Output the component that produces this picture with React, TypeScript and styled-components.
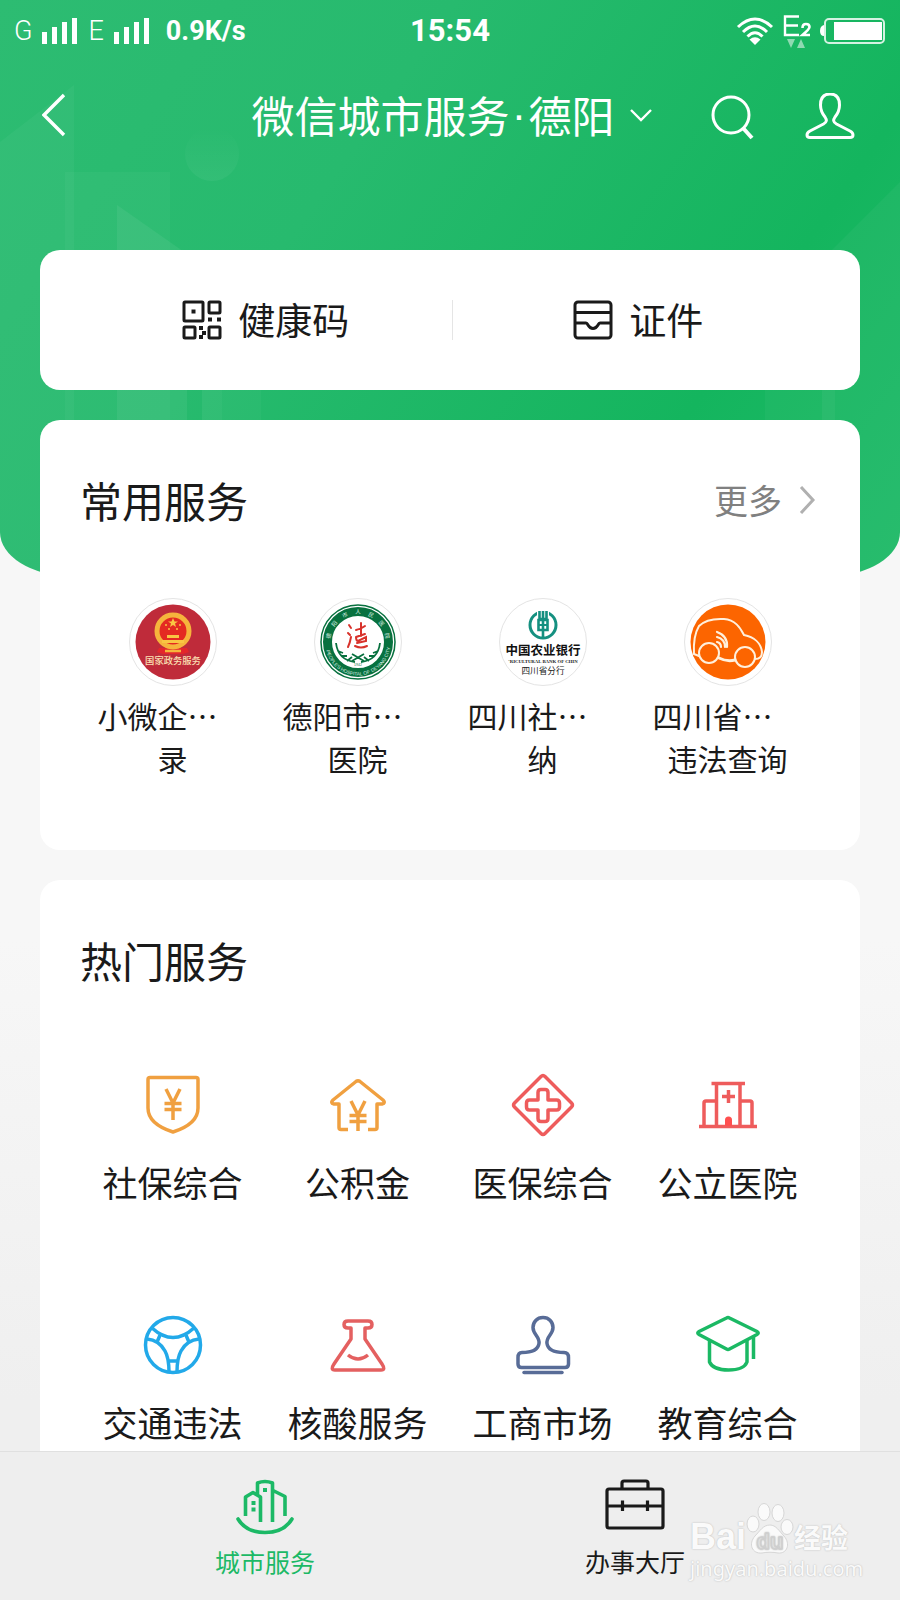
import React from "react";
import styled, { createGlobalStyle } from "styled-components";

const GlobalStyle = createGlobalStyle`
  * { box-sizing: border-box; }
  body {
    margin: 0;
    background: #f6f6f6;
    color: #1a1a1a;
    font-family: Roboto, "Noto Sans CJK SC", sans-serif;
  }
  button { font: inherit; color: inherit; background: none; border: 0; padding: 0; cursor: pointer; }
  a { color: inherit; text-decoration: none; }
  h1, h2, p { margin: 0; font-weight: 400; }
  svg { display: block; flex: none; }
`;

const cjk = `"Noto Sans CJK SC", sans-serif`;

const Screen = styled.div`
  height: 100vh;
  display: flex;
  flex-direction: column;
  font-family: ${cjk};
`;

const Scroller = styled.div`
  flex: 1;
  min-height: 0;
  overflow-y: auto;
  scrollbar-width: none;
  display: grid;
  grid-template-columns: minmax(0, 1fr);
  align-items: start;
  background: linear-gradient(#f7f7f7 0 940px, #efefef 1400px);
`;

const Backdrop = styled.div`
  grid-area: 1 / 1;
  height: 576px;
  display: flex;
  justify-content: space-between;
  overflow: hidden;
  border-radius: 0 0 70px 70px / 0 0 44px 44px;
  background: linear-gradient(125deg, #2dbc72 0%, #27ba6e 35%, #14b55e 75%, #20ba68 100%);
`;

const Content = styled.div`
  grid-area: 1 / 1;
  display: flex;
  flex-direction: column;
`;

const StatusBar = styled.div`
  height: 62px;
  padding: 0 14px;
  display: grid;
  grid-template-columns: 1fr auto 1fr;
  align-items: center;
  color: #fff;
  font-family: Roboto, sans-serif;
`;

const StatusGroup = styled.div<{ $end?: boolean }>`
  display: flex;
  align-items: center;
  justify-content: ${(p) => (p.$end ? "flex-end" : "flex-start")};
  gap: ${(p) => (p.$end ? 8 : 10)}px;
`;

const Network = styled.span`
  font-size: 27px;
  line-height: 32px;
  font-weight: 300;
`;

const Speed = styled.span`
  margin-left: 6px;
  font-size: 27px;
  line-height: 32px;
  font-weight: 700;
`;

const Clock = styled.time`
  font-size: 31px;
  line-height: 36px;
  font-weight: 700;
`;

const TitleBar = styled.header`
  height: 110px;
  margin-bottom: 78px;
  padding: 0 42px;
  display: grid;
  grid-template-columns: 1fr auto 1fr;
  align-items: center;
  color: #fff;
`;

const CityPicker = styled.button`
  display: flex;
  align-items: center;
  gap: 14px;
  padding-left: 4px;
`;

const Title = styled.h1`
  display: flex;
  padding-bottom: 6px;
  font-size: 43px;
  line-height: 60px;
`;

const Dot = styled.span`
  width: 19px;
  text-align: center;
  font-family: "Liberation Sans", sans-serif;
`;

const Actions = styled.div`
  display: flex;
  justify-content: flex-end;
  gap: 46px;
`;

const Main = styled.main`
  padding: 0 40px 30px;
  display: flex;
  flex-direction: column;
  gap: 30px;
`;

const Card = styled.section`
  background: #fff;
  border-radius: 20px;
`;

const QuickCard = styled(Card)`
  height: 140px;
  padding: 0 36px 0 40px;
  display: grid;
  grid-template-columns: 1fr 1px 1fr;
  align-items: center;
`;

const Divider = styled.span`
  height: 40px;
  background: #e5e5e5;
`;

const QuickLink = styled.a`
  display: flex;
  align-items: center;
  justify-content: center;
  gap: 16px;
  font-size: 37px;
  line-height: 52px;
`;

const QuickText = styled.span`
  padding-bottom: 2px;
`;

const ServiceCard = styled(Card)<{ $bottom: number }>`
  padding: 50px 40px ${(p) => p.$bottom}px;
`;

const CardHead = styled.div`
  height: 64px;
  padding-bottom: 4px;
  display: flex;
  align-items: center;
  justify-content: space-between;
`;

const CardTitle = styled.h2`
  font-size: 42px;
  line-height: 60px;
`;

const More = styled.a`
  display: flex;
  align-items: center;
  gap: 16px;
  padding-right: 4px;
  color: #808080;
  font-size: 34px;
  line-height: 48px;
`;

const Grid = styled.div<{ $top: number; $gap?: number }>`
  margin-top: ${(p) => p.$top}px;
  display: grid;
  grid-template-columns: repeat(4, minmax(0, 1fr));
  row-gap: ${(p) => p.$gap ?? 0}px;
`;

const Item = styled.a`
  display: flex;
  flex-direction: column;
  align-items: center;
`;

const Badge = styled.span`
  width: 88px;
  height: 88px;
  margin-bottom: 8px;
  border: 1px solid #e4e4e4;
  border-radius: 50%;
  display: grid;
  place-items: center;
`;

const Lines = styled.span`
  width: 150px;
  font-size: 30px;
  line-height: 43px;
`;

const Line = styled.span<{ $center?: boolean }>`
  display: block;
  white-space: nowrap;
  text-align: ${(p) => (p.$center ? "center" : "left")};
`;

const ItemLabel = styled.span`
  margin-top: 19px;
  font-size: 35px;
  line-height: 50px;
  white-space: nowrap;
`;

const TabBar = styled.nav`
  position: relative;
  flex: none;
  height: 149px;
  padding: 0 80px;
  border-top: 1px solid #e0e0e0;
  background: #eeeeee;
  display: grid;
  grid-template-columns: 1fr 1fr;
`;

const Tab = styled.a<{ $active?: boolean }>`
  display: flex;
  flex-direction: column;
  align-items: center;
  padding-top: 25px;
  gap: 8px;
  color: ${(p) => (p.$active ? "#1cb966" : "#1a1a1a")};
  font-size: 25px;
  line-height: 36px;
`;

const Watermark = styled.div`
  position: absolute;
  right: 48px;
  bottom: 18px;
  width: 162px;
  color: #fafafa;
  text-shadow: 0 0 2px #c4c4c4, 0 0 1px #cccccc;
`;

const Brand = styled.div`
  display: flex;
  align-items: flex-end;
  font: 700 36px/38px "Liberation Sans", "Noto Sans CJK SC", sans-serif;
`;

const BrandCn = styled.span`
  font: 700 27px/38px ${cjk};
`;

const Site = styled.div`
  font: 400 20px/26px "Noto Sans", sans-serif;
`;

const SkylineLeft = () => (
  <svg width="270" height="576" fill="#fff" aria-hidden="true">
    <defs>
      <linearGradient id="moon" x1="0" y1="0" x2="0" y2="1">
        <stop offset="0" stopColor="#fff" stopOpacity="0" />
        <stop offset="1" stopColor="#fff" stopOpacity=".05" />
      </linearGradient>
    </defs>
    <path d="M0 142 74 85V576H0Z" opacity=".035" />
    <path d="M65 172H170V576H65Z" opacity=".03" />
    <path d="M117 205 187 254V576H117Z" opacity=".06" />
    <path d="M202 300H222V576H202Z" opacity=".06" />
    <path d="M222 300H261V576H222Z" opacity=".03" />
    <circle cx="212" cy="154" r="27" fill="url(#moon)" />
  </svg>
);

const SkylineRight = () => (
  <svg width="140" height="576" fill="#fff" aria-hidden="true">
    <path d="M140 182 62 260V576H140Z" opacity=".04" />
    <path d="M5 300H62V576H5Z" opacity=".03" />
    <path d="M62 300H75V576H62Z" opacity=".04" />
  </svg>
);

const Bars = () => (
  <svg width="36" height="28" fill="#fff" aria-hidden="true">
    <path d="M0 15h5v12H0zM10 10h5v17h-5zM20 5h5v22h-5zM30 1h5v26h-5z" />
  </svg>
);

const Wifi = () => (
  <svg width="38" height="30" viewBox="0 0 38 30" fill="none" stroke="#fff" strokeWidth="3" aria-hidden="true">
    <path d="M2 11Q19-5 36 11M7 16Q19 4 31 16M11.500 20.500Q19 13 26.500 20.500" />
    <path d="m13.500 23.500 5.500 5.500 5.500-5.500Q19 19 13.500 23.500Z" fill="#fff" stroke="none" />
  </svg>
);

const CellData = () => (
  <svg width="30" height="36" viewBox="0 0 30 36" fill="none" stroke="#fff" aria-hidden="true">
    <path d="M17 3.500H3V22H17M3 12.500H16" strokeWidth="2.400" />
    <path d="M20.500 15q0-4 3.500-4 3.500 0 3.500 3 0 2-7 8H28" strokeWidth="2.600" />
    <path d="M5 26h8l-4 9ZM15 35l4-9 4 9Z" fill="#8fdab2" stroke="none" />
  </svg>
);

const Battery = () => (
  <svg width="66" height="28" viewBox="0 0 66 28" fill="none" aria-hidden="true">
    <path d="M4 8Q0 9 0 14t4 5Z" fill="#fff" />
    <rect x="5" y="2" width="59" height="24" rx="4" stroke="#d5f2e2" strokeWidth="2" />
    <rect x="14" y="5" width="48" height="18" fill="#fff" />
  </svg>
);

const BackIcon = () => (
  <svg width="26" height="46" viewBox="0 0 26 46" fill="none" stroke="#fff" strokeWidth="3.400">
    <path d="M22 3 2 23 22 43" />
  </svg>
);

const DownIcon = () => (
  <svg width="24" height="16" viewBox="0 0 24 16" fill="none" stroke="#fff" strokeWidth="2.400">
    <path d="m2 1 10 10L22 1" />
  </svg>
);

const SearchIcon = () => (
  <svg width="48" height="48" viewBox="0 0 48 48" fill="none" stroke="#fff" strokeWidth="3">
    <circle cx="23" cy="22" r="18" />
    <path d="m35 35 9 10" strokeWidth="4" />
  </svg>
);

const PersonIcon = () => (
  <svg width="56" height="48" viewBox="0 0 56 48" fill="none" stroke="#fff" strokeWidth="3" strokeLinejoin="round">
    <path d="M28 1C21 1 18.500 6 18.500 12c0 6 2 9 4.500 12 2 3 2 5-1.500 7L8 38q-3 1.500-3 4t3 2.500h40q3 0 3-2.500t-3-4L34.500 31c-3.500-2-3.500-4-1.500-7 2.500-3 4.500-6 4.500-12C37.500 6 35 1 28 1Z" />
  </svg>
);

const CodeIcon = () => (
  <svg width="40" height="40" viewBox="0 0 40 40" fill="none" stroke="#1a1a1a" strokeWidth="3" aria-hidden="true">
    <rect x="2" y="2" width="19" height="19" rx="1" />
    <rect x="27" y="2" width="11" height="11" rx="1" />
    <rect x="2" y="27" width="11" height="11" rx="1" />
    <rect x="27" y="27" width="11" height="11" rx="1" />
    <path d="M9.500 11.500h4M26 19.500h4M35 19.500h4M17 28h4M17 37h4M20 33h4" strokeWidth="4" />
  </svg>
);

const CardIcon = () => (
  <svg width="40" height="40" viewBox="0 0 40 40" fill="none" stroke="#1a1a1a" strokeWidth="3" strokeLinejoin="round" aria-hidden="true">
    <rect x="2" y="2" width="36" height="36" rx="3" />
    <path d="M2 12.500H38M2 23H13q1 0 2 2 2 3.500 5 3.500t5-3.500q1-2 2-2H38" />
  </svg>
);

const RightIcon = () => (
  <svg width="18" height="28" viewBox="0 0 18 28" fill="none" stroke="#b0b0b0" strokeWidth="3" aria-hidden="true">
    <path d="m3 1 12 13L3 27" />
  </svg>
);

const GovLogo = () => (
  <svg width="76" height="76" viewBox="0 0 76 76" aria-hidden="true">
    <circle cx="38" cy="38" r="37.500" fill="#bf2b3a" />
    <path d="M24 44h28l2 4-6 2H28l-6-2Z" fill="#e3262b" />
    <circle cx="38" cy="27" r="16" fill="#e42a22" stroke="#f6b43c" strokeWidth="5" />
    <path d="m38 14 1.500 3.500h3.500l-3 2 1 3.500-3-2-3 2 1-3.500-3-2h3.500ZM32 34h12v-3H32ZM27 36h22v3H27Z" fill="#f9c643" />
    <g fill="#f9c643"><circle cx="31" cy="21" r="1" /><circle cx="45" cy="21" r="1" /><circle cx="34" cy="25" r="1" /><circle cx="42" cy="25" r="1" /></g>
    <path d="M30 47h16M32 43h12" stroke="#f6b43c" strokeWidth="2.500" fill="none" />
    <text x="38" y="60" textAnchor="middle" fontSize="9.300" fontWeight="500" fill="#fbe0b4" fontFamily="Noto Sans CJK SC">国家政务服务</text>
  </svg>
);

const sealTop = ["德", "阳", "市", "人", "民", "医", "院"];
const sealBottom = [
  { word: "PEOPLE'S", at: "19%" },
  { word: "HOSPITAL OF", at: "47%" },
  { word: "DEYANG CITY", at: "80%" },
];

const HospitalLogo = () => (
  <svg width="78" height="78" viewBox="0 0 78 78" fill="none" aria-hidden="true">
    <circle cx="39" cy="39" r="37" stroke="#08713f" strokeWidth="1.500" />
    <circle cx="39" cy="39" r="30.500" stroke="#08713f" strokeWidth="9" />
    <defs>
      <path id="seal-bottom" d="M6.500 40A32.500 32.500 0 0 0 71.500 40" />
    </defs>
    {sealTop.map((c, i) => (
      <text key={c} x="39" y="11" transform={`rotate(${(i - 3) * 26} 39 39)`} textAnchor="middle" fontSize="5.500" fill="#d8f0e2" fontFamily="Noto Sans CJK SC">{c}</text>
    ))}
    {sealBottom.map((s) => (
      <text key={s.word} fontSize="4.800" fill="#d8f0e2" fontFamily="Liberation Sans" textAnchor="middle">
        <textPath href="#seal-bottom" startOffset={s.at}>{s.word}</textPath>
      </text>
    ))}
    <path d="M17 40q2 17 19 19M61 40q-2 17-19 19M19 48l5 2M22 53l6 0M59 48l-5 2M56 53l-6 0M28 58l5-4M50 58l-5-4M33 51l12 7M45 51l-12 7" stroke="#08713f" strokeWidth="1.800" />
    <path d="m30 22 2 3M29 30l2 2M29 44q2-4 3-10M37 27q5-1 9-4M42 20v13M37 34l9-3M37 34q0 4 2 4l8-4v4l-9 2M36 43q6 3 12 0" stroke="#d8322b" strokeWidth="2" strokeLinecap="round" />
    <text x="39" y="63" textAnchor="middle" fontSize="3.500" fill="#08713f" fontFamily="Liberation Sans">1942</text>
  </svg>
);

const BankLogo = () => (
  <svg width="80" height="80" viewBox="0 0 80 80" fill="none" aria-hidden="true">
    <circle cx="40" cy="23" r="13" stroke="#159080" strokeWidth="3" />
    <path d="M34 8h12v8H34Z" fill="#fff" />
    <path d="M36.500 9v8h7V9M40 9v28M35.500 18h9v10h-9Z" stroke="#159080" strokeWidth="2.600" />
    <path d="M36 23h8" stroke="#159080" strokeWidth="2" />
    <text x="40" y="53" textAnchor="middle" fontSize="12.500" fontWeight="700" fill="#111" fontFamily="Noto Sans CJK SC">中国农业银行</text>
    <text x="40" y="61" textAnchor="middle" fontSize="4.800" fontWeight="700" fill="#222" fontFamily="Liberation Serif">'RICULTURAL BANK OF CHIN</text>
    <text x="40" y="72" textAnchor="middle" fontSize="8.600" fill="#222" fontFamily="Noto Sans CJK SC">四川省分行</text>
  </svg>
);

const CarLogo = () => (
  <svg width="76" height="76" viewBox="0 0 76 76" fill="none" stroke="#fff0dc" strokeWidth="2" strokeLinecap="round" aria-hidden="true">
    <circle cx="38" cy="38" r="37.500" fill="#fc6500" stroke="none" />
    <path d="M9 52 4 50Q3 32 9 22 17 14 34 15c11 1 16 8 20 16 10 2 17 8 18 17q0 7-7 7" />
    <circle cx="19" cy="49" r="10" />
    <circle cx="55" cy="53" r="10" />
    <path d="M29 54q8 4 16 2" strokeWidth="3" />
    <path d="M27 38q4 1 4 5M27 33q8 2 8 10M27 28q11 4 10 15" strokeWidth="2.200" />
  </svg>
);

const Glyph = ({ color, children }: { color: string; children: React.ReactNode }) => (
  <svg width="66" height="66" viewBox="0 0 66 66" fill="none" stroke={color} strokeWidth="3.500" strokeLinejoin="round" aria-hidden="true">
    {children}
  </svg>
);

const frequent = [
  { first: "小微企…", second: "录", logo: <GovLogo /> },
  { first: "德阳市…", second: "医院", logo: <HospitalLogo /> },
  { first: "四川社…", second: "纳", logo: <BankLogo /> },
  { first: "四川省…", second: "违法查询", logo: <CarLogo /> },
];

const popular = [
  {
    label: "社保综合",
    icon: (
      <Glyph color="#f0a040">
        <path d="M10 5.500H56q2 0 2 2V36Q58 52 33 60 8 52 8 36V7.500q0-2 2-2Z" />
        <path d="m26 17 7 14 7-14M24.500 31.500h17M24.500 37.500h17M33 31v17" />
      </Glyph>
    ),
  },
  {
    label: "公积金",
    icon: (
      <Glyph color="#f0a040">
        <path d="M23 57.500H16q-2 0-2-2V32H9q-4-1-1-4L31 9.500q2-1.500 4 0L58 28q3 3-1 4H52V55.500q0 2-2 2H43" />
        <path d="m26 29 7 14 7-14M24.500 43.500h17M24.500 49.500h17M33 43v16" />
      </Glyph>
    ),
  },
  {
    label: "医保综合",
    icon: (
      <Glyph color="#ee5c5c">
        <path d="M31 4.500q2-2 4 0L61.500 31q2 2 0 4L35 61.500q-2 2-4 0L4.500 35q-2-2 0-4Z" />
        <path d="M31 17.500h4q3 0 3 3V28h8.500q3 0 3 3v4q0 3-3 3H38v8.500q0 3-3 3h-4q-3 0-3-3V38h-8.500q-3 0-3-3v-4q0-3 3-3H28v-7.500q0-3 3-3Z" />
      </Glyph>
    ),
  },
  {
    label: "公立医院",
    icon: (
      <Glyph color="#ee5c5c">
        <path d="M16.500 11.500H50M4 54.500H62M21.500 11.500v43M45 11.500v43M20 29H11q-2 0-2 2V54M46 29h9q2 0 2 2V54M33.500 18v13M27 24.500h13" />
        <path d="M30 54V48q0-3.500 3.500-3.500T37 48v6Z" fill="#ff4f4f" stroke="none" />
      </Glyph>
    ),
  },
  {
    label: "交通违法",
    icon: (
      <Glyph color="#22a9e9">
        <circle cx="33" cy="33" r="27.500" />
        <path d="M12 16q21 19 42 0M7 27q12 1 18 12 4 7 4 21M59 27q-12 1-18 12-4 7-4 21M29 49h8M20.500 22l-3 7M45.500 22l3 7" />
      </Glyph>
    ),
  },
  {
    label: "核酸服务",
    icon: (
      <Glyph color="#e46060">
        <path d="M27 9H43q4 0 4 3.500T43 16h-3V27L57 52q4 6-1 6H10q-5 0-1-6L26 27V16h-3q-4 0-4-3.500T23 9Z" />
        <path d="M23 43q10 8 20 0" />
      </Glyph>
    ),
  },
  {
    label: "工商市场",
    icon: (
      <Glyph color="#586c97">
        <path d="M33 5.500c-6 0-10 4.500-10 10 0 7 7 9 6 16C28 38 22 40.500 12 40.500q-4 0-4 5V52q0 3.500 3.500 3.500H55q3.500 0 3.500-3.500V45.500q0-5-4.500-5C44 40.500 38 38 37 31.500c-1-7 6-9 6-16 0-5.500-4-10-10-10Z" />
        <path d="M14 60.500H52" strokeLinecap="round" />
      </Glyph>
    ),
  },
  {
    label: "教育综合",
    icon: (
      <Glyph color="#1bb964">
        <path d="M31.500 6q1.500-.8 3 0L62 19.500q2.500 1.500 0 3L34.500 37q-1.500.8-3 0L4 22.500q-2.500-1.500 0-3Z" />
        <path d="M14.500 28V50Q18 58 33.500 58T52 50V28M58.500 25V47" />
      </Glyph>
    ),
  },
];

const CityIcon = () => (
  <svg width="60" height="58" viewBox="0 0 60 58" fill="none" stroke="#1cb966" strokeWidth="3.600" strokeLinejoin="round" aria-hidden="true">
    <path d="M3 42Q11 55.500 30 55.500T57 42" strokeLinecap="round" />
    <path d="M10.500 39V20l7.500-4.500 7.500 4.500V45M22.500 17V6Q30 3 37.500 6V45M38 13.500l12 6V39" />
    <path d="M18.500 24v4M18.500 30.500v4M30 11v4" strokeWidth="4" />
  </svg>
);

const CaseIcon = () => (
  <svg width="60" height="58" viewBox="0 0 60 58" fill="none" stroke="#1a1a1a" strokeWidth="3.200" strokeLinejoin="round" aria-hidden="true">
    <rect x="2" y="12" width="56" height="39" rx="2" />
    <path d="M17 12V6q0-2 2-2H41q2 0 2 2v6M2 29H58M17.500 23.500V34M42.500 23.500V34" />
  </svg>
);

const Paw = () => (
  <svg width="48" height="54" viewBox="0 0 48 54" fill="#fafafa" stroke="#d6d6d6" aria-hidden="true">
    <ellipse cx="7" cy="22" rx="6" ry="8" />
    <ellipse cx="18" cy="10" rx="6" ry="8.500" />
    <ellipse cx="32" cy="11" rx="6" ry="8.500" />
    <ellipse cx="41" cy="25" rx="6" ry="7.500" />
    <path d="M24 23c6 0 9 6 14 11 7 8 3 18-6 17-5-1-11-1-16 0-10 1-14-9-7-17 5-5 8-11 15-11Z" />
    <text x="24" y="47" textAnchor="middle" fontSize="22" fontWeight="700" fill="#eeeeee" stroke="#d0d0d0" fontFamily="Liberation Sans">du</text>
  </svg>
);

export default function App() {
  return (
    <Screen lang="zh-CN">
      <GlobalStyle />
      <Scroller>
        <Backdrop>
          <SkylineLeft />
          <SkylineRight />
        </Backdrop>
        <Content>
          <StatusBar>
            <StatusGroup>
              <Network>G</Network>
              <Bars />
              <Network>E</Network>
              <Bars />
              <Speed>0.9K/s</Speed>
            </StatusGroup>
            <Clock>15:54</Clock>
            <StatusGroup $end>
              <Wifi />
              <CellData />
              <Battery />
            </StatusGroup>
          </StatusBar>
          <TitleBar>
            <div>
              <button type="button" aria-label="返回"><BackIcon /></button>
            </div>
            <CityPicker type="button">
              <Title>微信城市服务<Dot>·</Dot>德阳</Title>
              <DownIcon />
            </CityPicker>
            <Actions>
              <button type="button" aria-label="搜索"><SearchIcon /></button>
              <button type="button" aria-label="我的"><PersonIcon /></button>
            </Actions>
          </TitleBar>
          <Main>
            <QuickCard>
              <QuickLink href="#health"><CodeIcon /><QuickText>健康码</QuickText></QuickLink>
              <Divider />
              <QuickLink href="#papers"><CardIcon /><QuickText>证件</QuickText></QuickLink>
            </QuickCard>
            <ServiceCard $bottom={70}>
              <CardHead>
                <CardTitle>常用服务</CardTitle>
                <More href="#more">更多<RightIcon /></More>
              </CardHead>
              <Grid $top={64}>
                {frequent.map((s) => (
                  <Item href="#service" key={s.first}>
                    <Badge>{s.logo}</Badge>
                    <Lines>
                      <Line>{s.first}</Line>
                      <Line $center>{s.second}</Line>
                    </Lines>
                  </Item>
                ))}
              </Grid>
            </ServiceCard>
            <ServiceCard $bottom={60}>
              <CardHead>
                <CardTitle>热门服务</CardTitle>
              </CardHead>
              <Grid $top={78} $gap={105}>
                {popular.map((s) => (
                  <Item href="#service" key={s.label}>
                    {s.icon}
                    <ItemLabel>{s.label}</ItemLabel>
                  </Item>
                ))}
              </Grid>
            </ServiceCard>
          </Main>
        </Content>
      </Scroller>
      <TabBar>
        <Tab href="#city" $active><CityIcon />城市服务</Tab>
        <Tab href="#hall"><CaseIcon />办事大厅</Tab>
        <Watermark>
          <Brand>Bai<Paw /><BrandCn>经验</BrandCn></Brand>
          <Site>jingyan.baidu.com</Site>
        </Watermark>
      </TabBar>
    </Screen>
  );
}
